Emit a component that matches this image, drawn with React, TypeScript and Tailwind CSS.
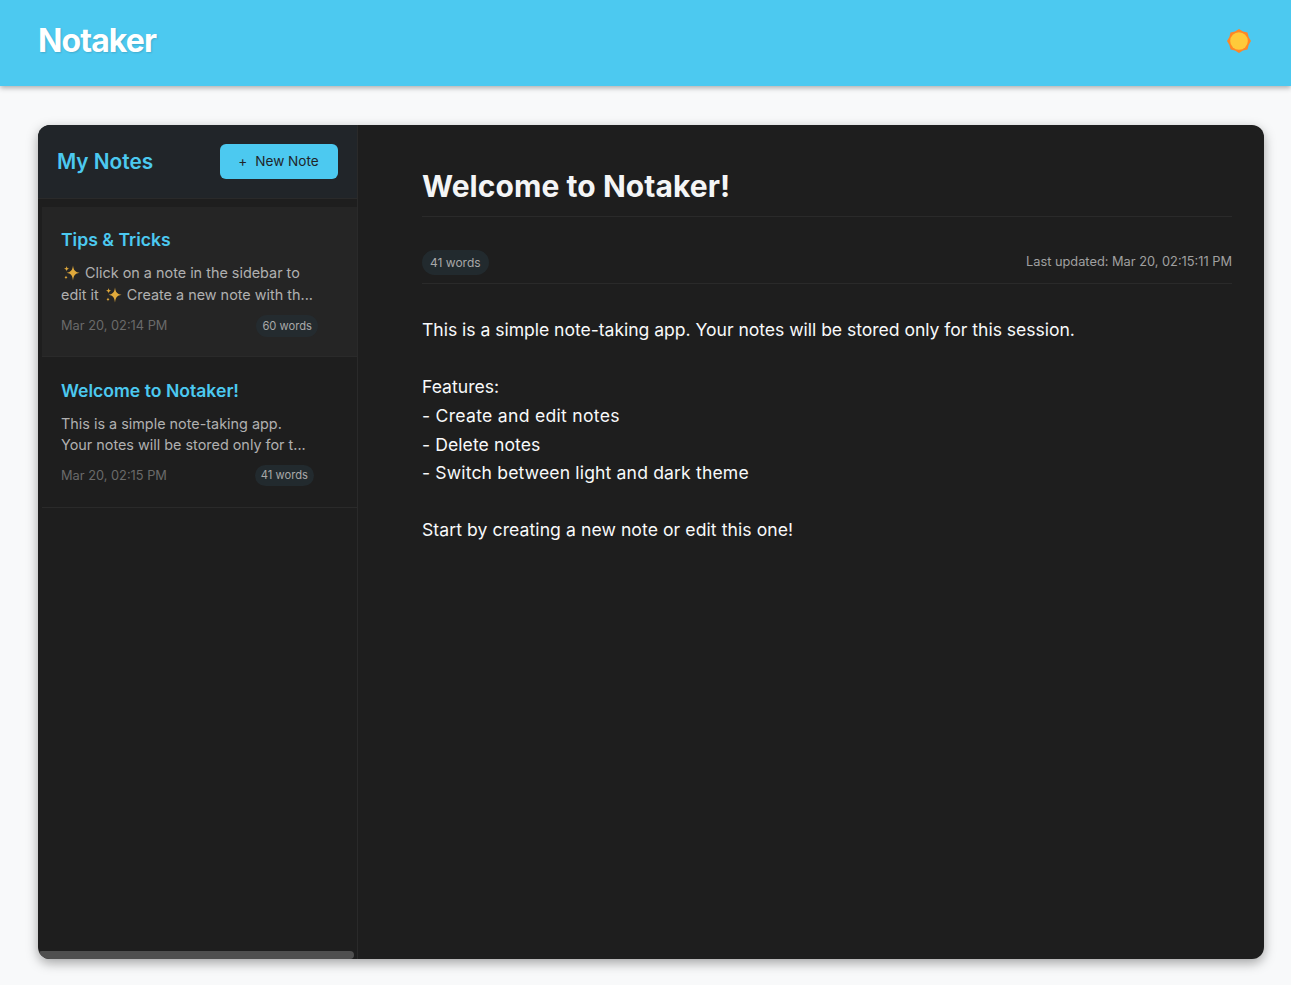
const inter = "font-['Inter',sans-serif]";

const sunPoints = Array.from({ length: 16 }, (_, i) => {
  const a = (i * Math.PI) / 8 - Math.PI / 2;
  const r = i % 2 === 0 ? 12 : 10.4;
  return `${(12 + r * Math.cos(a)).toFixed(2)},${(12 + r * Math.sin(a)).toFixed(2)}`;
}).join(" ");

function Sun() {
  return (
    <svg width="24" height="24" viewBox="0 0 24 24" aria-hidden="true">
      <polygon points={sunPoints} fill="#ff8626" />
      <circle cx="12" cy="12" r="8.8" fill="#ffca3a" />
    </svg>
  );
}

function Sparkle() {
  return (
    <svg width="20" height="16" viewBox="-2 0 20 16" className="inline-block align-[-3px]" aria-hidden="true">
      <path d="M10 0.5 C10.7 5.2 11.8 6.9 16.6 7.8 C11.8 8.7 10.7 10.4 10 15.5 C9.3 10.4 8.2 8.7 3.6 7.8 C8.2 6.9 9.3 5.2 10 0.5 Z" fill="#e0a93b" />
      <path d="M3.6 1 C3.9 2.8 4.5 3.4 6.4 3.7 C4.5 4 3.9 4.6 3.6 6.4 C3.3 4.6 2.7 4 0.8 3.7 C2.7 3.4 3.3 2.8 3.6 1 Z" fill="#e0a93b" />
      <path d="M3 10.4 C3.2 11.6 3.7 12 4.9 12.3 C3.7 12.6 3.2 13 3 14.4 C2.8 13 2.3 12.6 1.1 12.3 C2.3 12 2.8 11.6 3 10.4 Z" fill="#e0a93b" />
    </svg>
  );
}

export default function App() {
  return (
    <div className={`${inter} min-h-[985px] bg-[#f8f9fa] flex flex-col`}>
      <header className="h-[86px] pb-[4px] bg-[#4cc9f0] shadow-[0_2px_5px_rgba(0,0,0,0.3)] flex items-center justify-between pl-[38px] pr-[40px]">
        <h1 className="text-[32px] font-bold text-white tracking-[-0.9px] [text-shadow:1px_1px_2px_rgba(0,0,0,0.15)]">Notaker</h1>
        <Sun />
      </header>
      <main className="pt-[39px] px-[38px] pr-[27px] flex">
        <div className="w-[1226px] h-[834px] rounded-xl overflow-hidden bg-[#1e1e1e] shadow-[0_4px_12px_rgba(0,0,0,0.35)] flex">
          <aside className="w-[320px] shrink-0 border-r border-[#2a2a2a] flex flex-col relative">
            <div className="h-[74px] bg-[#212529] border-b border-[#2a2a2a] flex items-center justify-between pl-[19px] pr-[19px] shrink-0">
              <h2 className="text-[20.8px] font-semibold text-[#4cc9f0]">My Notes</h2>
              <button className="w-[118px] h-[35px] pr-[1px] rounded-md bg-[#4cc9f0] text-[#212529] text-[13.6px] flex items-center justify-center gap-2">
                <span>+</span>
                <span>New Note</span>
              </button>
            </div>
            <div className="pt-2 flex-1 flex flex-col pl-[4px]">
              <div className="h-[150px] bg-[#252525] border-b border-[#2a2a2a] pl-[19px] pr-[39px] pt-[22px]">
                <h3 className="text-[17.6px] font-semibold leading-[22px] text-[#4cc9f0]">Tips &amp; Tricks</h3>
                <p className="mt-[11px] text-[14.4px] leading-[22px] text-[#b0b0b0] whitespace-nowrap">
                  <Sparkle /> Click on a note in the sidebar to<br />edit it <Sparkle /> Create a new note with th...
                </p>
                <div className="mt-[9px] flex items-center justify-between">
                  <span className="text-[12.8px] text-[#6a6a6a]">Mar 20, 02:14 PM</span>
                  <span className="text-[11.2px] text-[#a8a8a8] bg-[#242b2f] rounded-full h-[22px] px-[6px] flex items-center">60 words</span>
                </div>
              </div>
              <div className="h-[151px] border-b border-[#2a2a2a] pl-[19px] pr-[43px] pt-[23px]">
                <h3 className="text-[17.6px] font-semibold leading-[22px] text-[#4cc9f0]">Welcome to Notaker!</h3>
                <p className="mt-[11px] text-[14.4px] leading-[21px] text-[#b0b0b0] whitespace-nowrap">
                  This is a simple note-taking app.<br />Your notes will be stored only for t...
                </p>
                <div className="mt-[10px] flex items-center justify-between">
                  <span className="text-[12.8px] text-[#6a6a6a]">Mar 20, 02:15 PM</span>
                  <span className="text-[11.2px] text-[#a8a8a8] bg-[#222a2e] rounded-full h-[21px] px-[6px] flex items-center">41 words</span>
                </div>
              </div>
            </div>
            <div className="absolute left-0 bottom-0 w-[316px] h-2 rounded-[4px] bg-[#4f4f4f]" />
          </aside>
          <section className="flex-1 pl-[64px] pr-[32px] pt-[42px]">
            <h1 className="text-[30px] leading-[38px] font-bold text-[#f4f5f6] border-b border-[#2a2a2a] pb-[11px] tracking-[0.06px]">Welcome to Notaker!</h1>
            <div className="mt-[32px] h-[35px] border-b border-[#2a2a2a] flex items-start justify-between pt-[1px]">
              <span className="text-xs h-[25px] px-2 rounded-full bg-[#222a2e] text-[#a8a8a8] flex items-center">41 words</span>
              <span className="text-[12.8px] leading-[23px] text-[#a0a0a0]">Last updated: Mar 20, 02:15:11 PM</span>
            </div>
            <div className="mt-[32.2px] text-[17.6px] leading-[28.6px] text-[#f8f9fa]">
              <p className="tracking-[-0.04px]">This is a simple note-taking app. Your notes will be stored only for this session.</p>
              <p className="mt-[28.6px]">Features:</p>
              <p className="tracking-[0.28px]">- Create and edit notes</p>
              <p className="tracking-[0.07px]">- Delete notes</p>
              <p className="tracking-[0.14px]">- Switch between light and dark theme</p>
              <p className="mt-[28.6px] tracking-[0.07px]">Start by creating a new note or edit this one!</p>
            </div>
          </section>
        </div>
      </main>
    </div>
  );
}
